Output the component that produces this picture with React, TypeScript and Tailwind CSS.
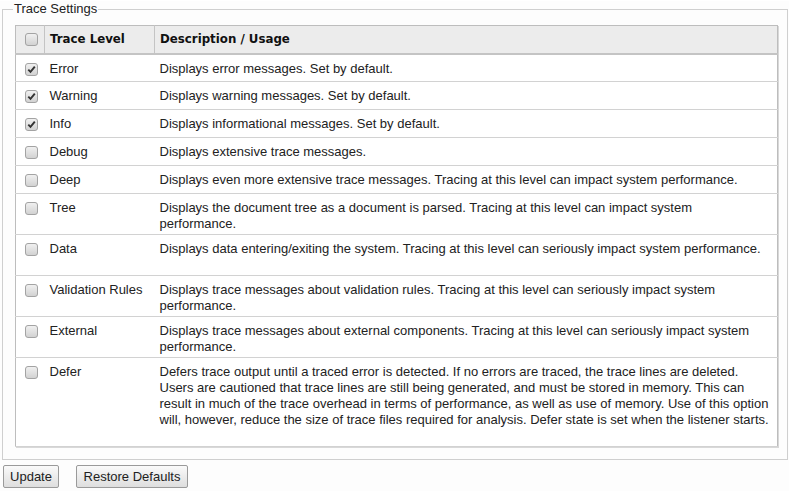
import React from "react";

type Level = {
  name: string;
  lines: string[];
  checked: boolean;
  h: string;
};

const levels: Level[] = [
  { name: "Error", lines: ["Displays error messages. Set by default."], checked: true, h: "h-[28px]" },
  { name: "Warning", lines: ["Displays warning messages. Set by default."], checked: true, h: "h-[28px]" },
  { name: "Info", lines: ["Displays informational messages. Set by default."], checked: true, h: "h-[28px]" },
  { name: "Debug", lines: ["Displays extensive trace messages."], checked: false, h: "h-[28px]" },
  {
    name: "Deep",
    lines: ["Displays even more extensive trace messages. Tracing at this level can impact system performance."],
    checked: false,
    h: "h-[28px]",
  },
  {
    name: "Tree",
    lines: [
      "Displays the document tree as a document is parsed. Tracing at this level can impact system",
      "performance.",
    ],
    checked: false,
    h: "h-[41px]",
  },
  {
    name: "Data",
    lines: ["Displays data entering/exiting the system. Tracing at this level can seriously impact system performance."],
    checked: false,
    h: "h-[41px]",
  },
  {
    name: "Validation Rules",
    lines: [
      "Displays trace messages about validation rules. Tracing at this level can seriously impact system",
      "performance.",
    ],
    checked: false,
    h: "h-[41px]",
  },
  {
    name: "External",
    lines: [
      "Displays trace messages about external components. Tracing at this level can seriously impact system",
      "performance.",
    ],
    checked: false,
    h: "h-[41px]",
  },
  {
    name: "Defer",
    lines: [
      "Defers trace output until a traced error is detected. If no errors are traced, the trace lines are deleted.",
      "Users are cautioned that trace lines are still being generated, and must be stored in memory. This can",
      "result in much of the trace overhead in terms of performance, as well as use of memory. Use of this option",
      "will, however, reduce the size of trace files required for analysis. Defer state is set when the listener starts.",
    ],
    checked: false,
    h: "h-[89px]",
  },
];

function Box({ checked }: { checked: boolean }) {
  return (
    <span className="inline-flex w-[13px] h-[13px] items-center justify-center rounded-[3px] border border-[#a3a3a3] bg-gradient-to-b from-[#f0f0f0] to-[#d2d2d2]">
      {checked && (
        <svg width="9" height="9" viewBox="0 0 9 9">
          <path d="M1.3 4.6 L3.5 6.9 L7.8 1.6" fill="none" stroke="#333" strokeWidth="1.9" />
        </svg>
      )}
    </span>
  );
}

export default function App() {
  return (
    <div className="min-h-[491px] bg-[#fdfdfd] text-[#222] text-[13px] font-['Liberation_Sans',Arial,sans-serif]">
      <fieldset className="mt-[1px] ml-[2px] mr-[2px] border border-[#cfcfcf] pl-[12px] pr-[9px] pb-[12px]">
        <legend className="ml-[-2px] leading-[16px] px-[1px] text-[#222]">Trace Settings</legend>
        <table className="mt-[8px] w-[763px] border-collapse border border-[#bdbdbd] bg-white shadow-[1px_1px_0_#d8d8d8]">
          <thead>
            <tr className="h-[28px] bg-[#ececec] border-b-2 border-[#c4c4c4]">
              <th className="w-[29px] border-r border-[#c4c4c4] p-0 pl-[9px] text-left align-middle">
                <span className="flex">
                  <Box checked={false} />
                </span>
              </th>
              <th className="w-[110px] border-r border-[#c4c4c4] pl-[5px] pt-[2px] text-left align-middle font-['DejaVu_Sans',Verdana,sans-serif] text-[11.8px] font-bold text-[#111]">
                Trace Level
              </th>
              <th className="pl-[5px] pt-[2px] text-left align-middle font-['DejaVu_Sans',Verdana,sans-serif] text-[11.8px] font-bold text-[#111]">
                Description / Usage
              </th>
            </tr>
          </thead>
          <tbody>
            {levels.map((l) => (
              <tr key={l.name} className={`${l.h} border-b border-[#d2d2d2] align-top`}>
                <td className="p-0 pl-[9px] pt-[8px]">
                  <span className="flex">
                    <Box checked={l.checked} />
                  </span>
                </td>
                <td className="pl-[5px] pt-[6px] leading-[16px] whitespace-nowrap">{l.name}</td>
                <td className="pl-[5px] pr-[2px] pt-[6px] leading-[16px]">
                  {l.lines.map((line) => (
                    <div key={line} className="whitespace-nowrap">
                      {line}
                    </div>
                  ))}
                </td>
              </tr>
            ))}
          </tbody>
        </table>
      </fieldset>
      <div className="flex gap-[17px] pl-[3px] pt-[5px]">
        <button className="h-[23px] w-[56px] rounded-[2px] border border-[#9a9a9a] bg-gradient-to-b from-[#fafafa] to-[#dedede] text-[13px] text-[#222]">
          Update
        </button>
        <button className="h-[23px] w-[112px] rounded-[2px] border border-[#9a9a9a] bg-gradient-to-b from-[#fafafa] to-[#dedede] text-[13px] text-[#222]">
          Restore Defaults
        </button>
      </div>
    </div>
  );
}
